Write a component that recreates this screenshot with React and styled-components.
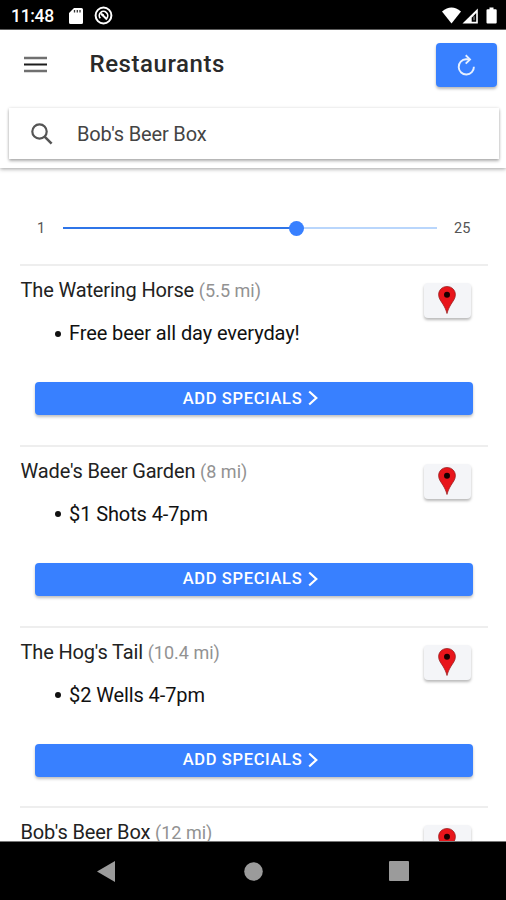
import React from 'react';
import styled, { createGlobalStyle } from 'styled-components';

const restaurants = [
  { name: 'The Watering Horse', distance: '5.5 mi', specials: ['Free beer all day everyday!'] },
  { name: "Wade's Beer Garden", distance: '8 mi', specials: ['$1 Shots 4-7pm'] },
  { name: "The Hog's Tail", distance: '10.4 mi', specials: ['$2 Wells 4-7pm'] },
  { name: "Bob's Beer Box", distance: '12 mi', specials: [] },
];

const StatusBar = () => (
  <Status>
    <span>11:48</span>
    <svg className='sd' width='14' height='16' viewBox='0 0 14 16'>
      <path d='M5 0h7.500A1.500 1.500 0 0 1 14 1.500v13a1.500 1.500 0 0 1-1.500 1.500h-11A1.500 1.500 0 0 1 0 14.500V5z' fill='#fff' />
      <path d='M5.500 2v2.500M8.300 2v2.500M11 2v2.500' stroke='#333' strokeWidth='1.300' />
    </svg>
    <svg className='sync' width='19' height='19' viewBox='0 0 19 19' fill='none' stroke='#fff'>
      <circle cx='9.500' cy='9.500' r='7.900' strokeWidth='2' />
      <path d='M6.300 12.300a4.200 4.200 0 1 1 6.400 0' strokeWidth='1.700' />
      <path d='M7 7.500l6 6' strokeWidth='2' />
      <circle cx='8.700' cy='9' r='1.200' fill='#fff' stroke='none' />
    </svg>
    <svg className='signals' width='56' height='18' viewBox='0 0 56 18'>
      <path d='M0 4.500Q9.500-3.500 19 4.500L9.500 16.500z' fill='#fff' />
      <path d='M35.800 1.500V16.500H20.500z' fill='#fff' />
      <path d='M34.200 6v8.700h-4.500v-4z' fill='#000' />
      <path d='M33 9.300v4h-2v-4z' fill='#555' />
      <path d='M47.500 0.500h4v1.700h2.200a1 1 0 0 1 1 1V15.500a1 1 0 0 1-1 1h-8.200a1 1 0 0 1-1-1V3.200a1 1 0 0 1 1-1h2z' fill='#fff' />
    </svg>
  </Status>
);

const Pin = () => (
  <svg width='18' height='28' viewBox='0 0 18 28'>
    <path
      d='M9 0.500C4 0.500 0.600 4.200 0.600 8.800c0 3.700 2.400 6.200 4.500 9.700C7 21.600 8 24 9 27.500c1-3.500 2-5.900 3.900-9 2.100-3.500 4.500-6 4.500-9.700C17.400 4.200 14 0.500 9 0.500z'
      fill='#e8151b'
      stroke='#8f1a1a'
      strokeWidth='0.700'
    />
    <circle cx='9' cy='8.800' r='3' fill='#180000' />
  </svg>
);

const Restaurant = ({ name, distance, specials }) => (
  <Row>
    <RowHead>
      <h3>
        {name} <span>({distance})</span>
      </h3>
      <MapButton aria-label='map'>
        <Pin />
      </MapButton>
    </RowHead>
    <Specials>
      {specials.map((special) => (
        <li key={special}>{special}</li>
      ))}
    </Specials>
    <AddButton>
      Add Specials
      <svg width='10' height='16' viewBox='0 0 10 16' fill='none' stroke='#fff' strokeWidth='2.200'>
        <path d='M1.200 1.500L8.300 8l-7.100 6.500' />
      </svg>
    </AddButton>
  </Row>
);

const App = () => {
  return (
    <Container>
      <GlobalStyle />
      <StatusBar />
      <Header>
        <Toolbar>
          <svg className='menu' width='23' height='17' viewBox='0 0 23 17'>
            <path d='M0 2h23M0 15h23' stroke='#707070' strokeWidth='2.300' />
            <path d='M0 8.500h23' stroke='#1c1c1c' strokeWidth='2' />
          </svg>
          <h1>Restaurants</h1>
          <RefreshButton aria-label='refresh'>
            <svg width='20' height='22' viewBox='0 0 20 22' fill='none' stroke='#e6f0ff' strokeWidth='1.900'>
              <path d='M13.500 5.300H10a7.600 7.600 0 1 0 7.900 7.400' />
              <path d='M9.700 1.200l4.300 4.200-4.300 4.200' />
            </svg>
          </RefreshButton>
        </Toolbar>
        <SearchBar>
          <svg width='22' height='22' viewBox='0 0 22 22' fill='none' stroke='#555' strokeWidth='2.200'>
            <circle cx='8.500' cy='8.500' r='7.200' />
            <path d='M13.600 13.600l7 7' strokeWidth='2.600' />
          </svg>
          <span>Bob's Beer Box</span>
        </SearchBar>
      </Header>
      <Content>
        <Range>
          <span className='min'>1</span>
          <Track>
            <Knob />
          </Track>
          <span className='max'>25</span>
        </Range>
        {restaurants.map((restaurant) => (
          <Restaurant key={restaurant.name} {...restaurant} />
        ))}
      </Content>
      <NavBar>
        <svg width='18' height='21' viewBox='0 0 18 21'>
          <path d='M18 0v21L0 10.500z' fill='#9b9b9b' />
        </svg>
        <svg className='home' width='19' height='19' viewBox='0 0 19 19'>
          <circle cx='9.500' cy='9.500' r='9.300' fill='#9b9b9b' />
        </svg>
        <svg width='20' height='20' viewBox='0 0 20 20'>
          <rect width='20' height='20' rx='1' fill='#9b9b9b' />
        </svg>
      </NavBar>
    </Container>
  );
};

export default App;

const GlobalStyle = createGlobalStyle`
  * {
    box-sizing: border-box;
    margin: 0;
    padding: 0;
  }
  body {
    background: #fff;
    font-family: Roboto, 'Liberation Sans', sans-serif;
    overflow: hidden;
  }
  svg {
    display: block;
    flex-shrink: 0;
  }
`;

const Container = styled.div`
  display: flex;
  flex-direction: column;
  width: 506px;
  height: 900px;
  overflow: hidden;
`;

const Status = styled.div`
  display: flex;
  align-items: center;
  flex-shrink: 0;
  height: 30px;
  padding: 2px 8px 0 11px;
  background: #000;
  border-bottom: 1px solid #666;
  color: #fff;

  span {
    width: 58px;
    font-size: 17.5px;
    font-weight: 500;
    letter-spacing: -0.3px;
  }
  .sync {
    margin-left: 11px;
  }
  .signals {
    margin-left: auto;
  }
`;

const Header = styled.header`
  flex-shrink: 0;
  height: 138px;
  padding: 12px 7px 0 9px;
  background: #fff;
  box-shadow: 0 1px 4px rgba(0, 0, 0, 0.38);
`;

const Toolbar = styled.div`
  display: flex;
  align-items: center;
  height: 45px;
  padding: 0 2px 0 15px;

  .menu {
    margin-right: 42.5px;
  }
  h1 {
    flex: 1;
    margin-top: -1px;
    font-size: 24px;
    font-weight: 500;
    letter-spacing: 0.55px;
    color: #2a2a2a;
  }
`;

const RefreshButton = styled.button`
  display: flex;
  align-items: center;
  justify-content: center;
  width: 61px;
  height: 44px;
  padding-right: 1px;
  border: none;
  border-radius: 4px;
  background: #3880ff;
  box-shadow: 0 2px 3px rgba(0, 0, 0, 0.28);
`;

const SearchBar = styled.div`
  display: flex;
  align-items: center;
  height: 51px;
  margin-top: 21px;
  padding-left: 22px;
  background: #fff;
  box-shadow: 0 2px 3px rgba(0, 0, 0, 0.3), 0 0 3px rgba(0, 0, 0, 0.12);

  span {
    margin-left: 24px;
    font-size: 20px;
    letter-spacing: -0.17px;
    color: #444;
  }
`;

const Content = styled.main`
  flex: 1;
  min-height: 0;
  overflow: hidden;
  padding: 0 18px 0 20px;
`;

const Range = styled.div`
  display: flex;
  align-items: center;
  height: 96px;
  padding: 24px 17px 0;

  span {
    font-size: 14.5px;
    letter-spacing: 0.2px;
    color: #555;
  }
  .min {
    width: 26px;
  }
  .max {
    margin-left: 17px;
  }
`;

const Track = styled.div`
  display: flex;
  align-items: center;
  width: 374px;
  height: 2px;
  background: linear-gradient(to right, #2f75e8 62.5%, #b9d6fc 62.5%);
`;

const Knob = styled.div`
  width: 15px;
  height: 15px;
  margin-left: 226px;
  border-radius: 50%;
  background: #3880ff;
`;

const Row = styled.section`
  display: flex;
  flex-direction: column;
  height: 180.75px;
  border-top: 2px solid #eee;
`;

const RowHead = styled.div`
  display: flex;
  justify-content: space-between;
  padding: 12px 17px 0 0.5px;

  h3 {
    font-size: 20px;
    font-weight: 400;
    line-height: 24px;
    letter-spacing: -0.15px;
    color: #222;
  }
  h3 span {
    font-size: 18px;
    letter-spacing: 0;
    color: #929292;
  }
`;

const MapButton = styled.button`
  display: flex;
  align-items: flex-start;
  justify-content: center;
  width: 47px;
  height: 35px;
  margin-top: 5px;
  padding: 3px 1px 0 0;
  border: none;
  border-radius: 4px;
  background: #f4f5f8;
  box-shadow: 0 2px 3px rgba(0, 0, 0, 0.28);
`;

const Specials = styled.ul`
  height: 64px;
  padding: 3px 0 0 34px;
  font-size: 20px;
  line-height: 24px;
  letter-spacing: -0.1px;
  color: #111;
  list-style: none;

  li {
    display: flex;
    align-items: center;
  }
  li::before {
    content: '';
    width: 6px;
    height: 6px;
    margin: 1px 8px 0 1px;
    border-radius: 50%;
    background: #111;
  }
`;

const AddButton = styled.button`
  display: flex;
  align-items: center;
  justify-content: center;
  gap: 6px;
  height: 33px;
  margin: 0 15px;
  padding: 0 7px 1px 0;
  border: none;
  border-radius: 4px;
  background: #3880ff;
  box-shadow: 0 2px 3px rgba(0, 0, 0, 0.25);
  color: #fff;
  font-family: inherit;
  font-size: 16.5px;
  font-weight: 500;
  letter-spacing: 0.65px;
  text-transform: uppercase;
`;

const NavBar = styled.nav`
  display: flex;
  align-items: center;
  justify-content: space-between;
  flex-shrink: 0;
  height: 59px;
  padding: 0 97px;
  border-top: 1px solid #777;
  background: #000;

  .home {
    margin-left: 2px;
  }
`;
